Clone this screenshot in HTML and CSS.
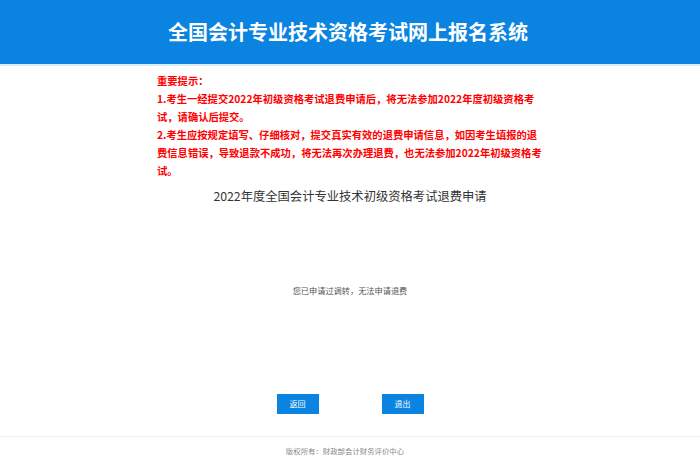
FILE: index.html
```html
<!DOCTYPE html>
<html lang="zh-CN">
<head>
<meta charset="utf-8">
<title>全国会计专业技术资格考试网上报名系统</title>
<link rel="stylesheet" href="styles.css">
</head>
<body>
<header class="header">
  <h1 class="header-title">全国会计专业技术资格考试网上报名系统</h1>
</header>
<main class="main">
  <div class="notice">
    <p>重要提示：</p>
    <p>1.考生一经提交2022年初级资格考试退费申请后，将无法参加2022年度初级资格考<br>试，请确认后提交。</p>
    <p>2.考生应按规定填写、仔细核对，提交真实有效的退费申请信息，如因考生填报的退<br>费信息错误，导致退款不成功，将无法再次办理退费，也无法参加2022年初级资格考<br>试。</p>
  </div>
  <h2 class="page-title">2022年度全国会计专业技术初级资格考试退费申请</h2>
  <p class="message">您已申请过调转，无法申请退费</p>
  <div class="actions">
    <button class="btn" type="button">返回</button>
    <button class="btn" type="button">退出</button>
  </div>
</main>
<footer class="footer">版权所有：财政部会计财务评价中心</footer>
</body>
</html>
```

FILE: styles.css
```css
html, body {
  margin: 0;
  padding: 0;
  background: #ffffff;
}
body {
  font-family: "Noto Sans CJK SC", "Noto Sans", sans-serif;
  color: #333333;
}
.header {
  height: 64px;
  background: #0a84e0;
  border-bottom: 2px solid #d9ecfa;
  display: flex;
  align-items: center;
  justify-content: center;
}
.header-title {
  margin: 0 4px 0 0;
  color: #ffffff;
  font-size: 20px;
  font-weight: 700;
  line-height: 24px;
}
.main {
  width: 400px;
  margin: 0 auto;
}
.notice {
  margin: 6px 0 0 7px;
  color: #ff0000;
  font-size: 10.3px;
  font-weight: 700;
  line-height: 18px;
  white-space: nowrap;
}
.notice p {
  margin: 0;
}
.page-title {
  margin: 6px -60px 0;
  text-align: center;
  font-size: 12.3px;
  font-weight: 400;
  line-height: 20px;
  color: #333333;
}
.message {
  margin: 78px 0 0;
  text-align: center;
  font-size: 8.2px;
  line-height: 12px;
  color: #555555;
}
.actions {
  margin-top: 98px;
  display: flex;
  justify-content: center;
  gap: 63px;
}
.btn {
  width: 42px;
  height: 20px;
  padding: 0;
  border: none;
  background: #0a84e0;
  color: #ffffff;
  font-family: inherit;
  font-size: 8px;
  line-height: 20px;
}
.footer {
  margin-top: 22px;
  border-top: 1px solid #eeeeee;
  height: 29px;
  line-height: 28px;
  text-align: center;
  font-size: 7.4px;
  color: #888888;
  padding-right: 10px;
}
```
